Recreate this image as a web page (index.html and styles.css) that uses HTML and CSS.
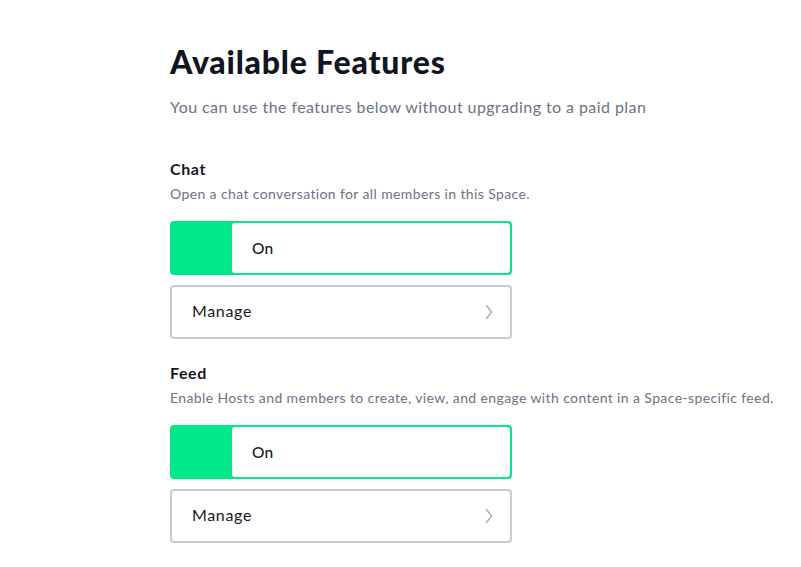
FILE: index.html
```html
<!DOCTYPE html>
<html lang="en">
<head>
<meta charset="utf-8">
<title>Available Features</title>
<link rel="stylesheet" href="styles.css">
</head>
<body>
<main class="page">
  <h1 class="title">Available Features</h1>
  <p class="subtitle">You can use the features below without upgrading to a paid plan</p>

  <section class="feature feature-first">
    <h2 class="feature-name">Chat</h2>
    <p class="feature-desc">Open a chat conversation for all members in this Space.</p>
    <div class="toggle">
      <span class="knob"></span>
      <span class="toggle-label">On</span>
    </div>
    <a class="manage" href="#">
      <span class="manage-text">Manage</span>
      <svg class="chev" width="8" height="16" viewBox="0 0 8 16"><polyline points="1.5,1.5 6.5,8 1.5,14.5" fill="none" stroke="#a9acba" stroke-width="1.4" stroke-linecap="round" stroke-linejoin="round"/></svg>
    </a>
  </section>

  <section class="feature">
    <h2 class="feature-name">Feed</h2>
    <p class="feature-desc">Enable Hosts and members to create, view, and engage with content in a Space-specific feed.</p>
    <div class="toggle">
      <span class="knob"></span>
      <span class="toggle-label">On</span>
    </div>
    <a class="manage" href="#">
      <span class="manage-text">Manage</span>
      <svg class="chev" width="8" height="16" viewBox="0 0 8 16"><polyline points="1.5,1.5 6.5,8 1.5,14.5" fill="none" stroke="#a9acba" stroke-width="1.4" stroke-linecap="round" stroke-linejoin="round"/></svg>
    </a>
  </section>
</main>
</body>
</html>
```
FILE: styles.css
```css
html, body {
  margin: 0;
  padding: 0;
  background: #ffffff;
}
body {
  font-family: "Lato", "Open Sans", sans-serif;
  color: #151823;
}
.page {
  padding: 42px 0 0 170px;
  display: flex;
  flex-direction: column;
}
.title {
  margin: 0;
  font-size: 32px;
  line-height: 40px;
  font-weight: 900;
  letter-spacing: 0.8px;
  color: #12151f;
}
.subtitle {
  margin: 13px 0 0;
  font-size: 16px;
  line-height: 24px;
  color: #6e7285;
  letter-spacing: 0.43px;
}
.feature {
  display: flex;
  flex-direction: column;
  margin-top: 22px;
}
.feature-first {
  margin-top: 38px;
}
.feature-name {
  margin: 0;
  font-size: 16px;
  line-height: 24px;
  font-weight: 700;
  letter-spacing: 0.6px;
  color: #151823;
}
.feature-desc {
  margin: 3px 0 17px;
  font-size: 14px;
  line-height: 20px;
  color: #6e7285;
  letter-spacing: 0.38px;
}
.toggle {
  box-sizing: border-box;
  width: 342px;
  height: 54px;
  display: flex;
  border: 2px solid #00e887;
  background: #00e887;
  border-radius: 4px;
}
.knob {
  width: 60px;
  flex: none;
}
.toggle-label {
  flex: 1;
  display: flex;
  align-items: center;
  padding-left: 20px;
  background: #ffffff;
  border-radius: 3px;
  font-size: 15.5px;
  color: #151823;
  font-weight: 500;
  letter-spacing: 0.3px;
}
.manage {
  box-sizing: border-box;
  width: 342px;
  height: 54px;
  margin-top: 10px;
  display: flex;
  align-items: center;
  justify-content: space-between;
  padding: 0 17px 0 20px;
  border: 2px solid #c9cbd6;
  border-radius: 4px;
  text-decoration: none;
  font-size: 16px;
  color: #151823;
  letter-spacing: 0.65px;
}
.manage-text {
  padding-bottom: 3px;
}
.chev {
  display: block;
}
```
